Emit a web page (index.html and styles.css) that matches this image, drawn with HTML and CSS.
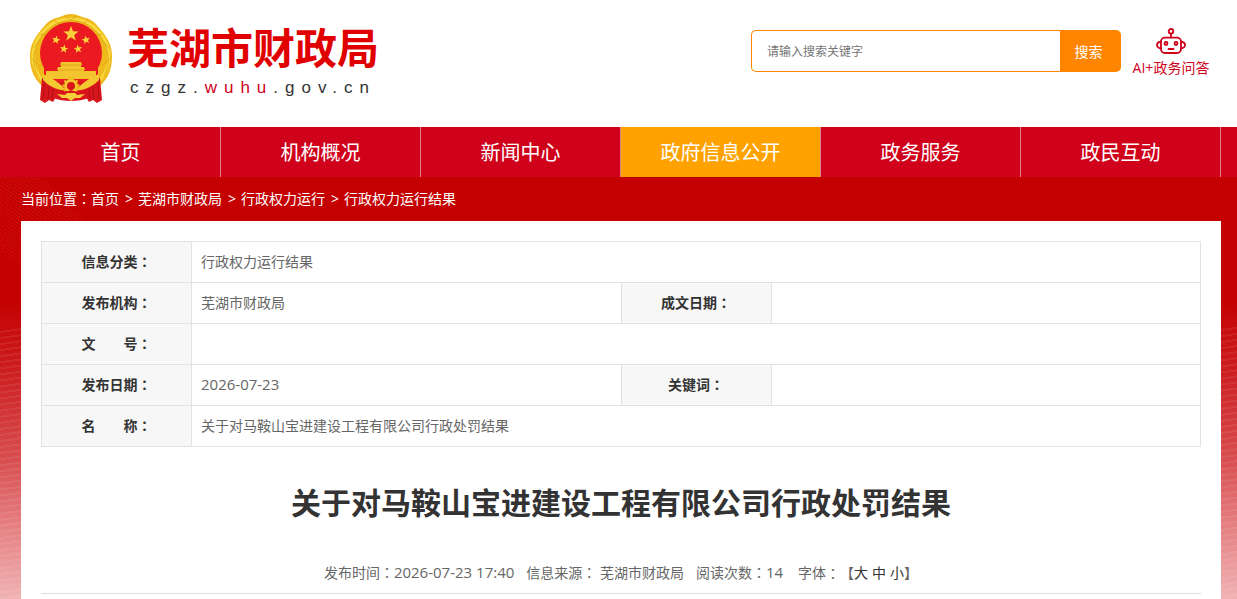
FILE: index.html
```html
<!DOCTYPE html>
<html lang="zh-CN">
<head>
<meta charset="utf-8">
<meta name="viewport" content="width=device-width, initial-scale=1">
<title>关于对马鞍山宝进建设工程有限公司行政处罚结果</title>
<link rel="stylesheet" href="styles.css">
</head>
<body>
<header class="header">
  <a class="brand" href="#">
    <svg class="emblem" viewBox="0 0 82 90" aria-hidden="true">
      <defs>
        <path id="star" d="M0-1 .25-.34 .951-.309 .4.13 .588.809 0 .42-.588.809-.4.13-.951-.309-.25-.34z"/>
      </defs>
      <path fill="#efb91b" d="M41 0c7 0 9 3 15 4 7 2 10 6 15 12 6 7 11 15 11 26 0 14-4 22-11 29L58 82H24L11 71C4 64 0 56 0 42 0 31 5 23 11 16 16 10 19 6 26 4c6-1 8-4 15-4z"/>
      <path fill="none" stroke="#f8d83c" stroke-width="3" d="M12 66C-3 48 2 27 17 14 29 2 53 2 65 14c15 13 20 34 5 52"/>
      <path fill="none" stroke="#dca615" stroke-width=".8" d="M8 62C-1 46 5 26 19 15 31 4 51 4 63 15c14 11 20 31 11 47M3 34l7-8M2 45l8 7M10 21l9-1M24 6l5 4M79 34l-7-8M80 45l-8 7M72 21l-9-1M58 6l-5 4M35 2l6 4 6-4"/>
      <circle cx="41" cy="39" r="31" fill="#ea1a20"/>
      <path fill="#ea1a20" d="M14 54h54v16H14z"/>
      <g fill="#f8d13c">
        <use href="#star" transform="translate(41 20) scale(8)"/>
        <use href="#star" transform="translate(26 26) rotate(12) scale(4.5)"/>
        <use href="#star" transform="translate(56 26) rotate(-12) scale(4.5)"/>
        <use href="#star" transform="translate(34 35) rotate(8) scale(4.5)"/>
        <use href="#star" transform="translate(48 35) rotate(-8) scale(4.5)"/>
      </g>
      <path fill="#f3c42d" d="M31 48h20l1 3h-1v2h3l1 3h-1v1h12v5h-2v3H18v-3h-2v-5h12v-1h-1l1-3h3v-2h-1z"/>
      <path stroke="#d79c18" stroke-width=".7" d="M30 51h22M28 56h26"/>
      <path fill="#d9151c" d="M12 64c7 0 11 2 17 5 5-4 19-4 24 0 6-3 10-5 17-5l2 22-5 3-4-3-4 2-3-5H26l-3 5-4-2-4 3-5-3z"/>
      <path fill="#f4c92f" d="M13 60c8 3 13 7 18 11l5 5c-9 1-17-4-23-10zM69 60c-8 3-13 7-18 11l-5 5c9 1 17-4 23-10z"/>
      <circle cx="41" cy="72" r="5.500" fill="none" stroke="#f4c92f" stroke-width="3"/>
      <circle cx="41" cy="72" r="7.500" fill="none" stroke="#efb91b" stroke-width="2" stroke-dasharray="2.500 2"/>
      <path fill="#d9151c" d="M26 75c5 4 10 3 15 1 5 2 10 3 15-1l3 9c-11 4-25 4-36 0z"/>
      <path fill="#f5cf3c" d="M27 80l8 1 2-2h8l2 2 8-1-5 4h-5l-4 3-4-3h-5z"/>
      <path fill="none" stroke="#9e1014" stroke-width=".8" d="M14 70l-1 15M19 73l-1 12M23 75l-1 10M68 70l1 15M63 73l1 12M59 75l1 10"/>
    </svg>
    <span class="brand-text">
      <span class="brand-name">芜湖市财政局</span>
      <span class="brand-domain">czgz.<em>wuhu</em>.gov.cn</span>
    </span>
  </a>
  <div class="tools">
    <form class="search" role="search">
      <input class="search-input" type="text" aria-label="搜索关键字" placeholder="请输入搜索关键字">
      <button class="search-button" type="button">搜索</button>
    </form>
    <a class="assistant" href="#">
      <svg class="robot" viewBox="0 0 30 27" fill="none" stroke="currentColor" stroke-width="1.8" stroke-linecap="round" aria-hidden="true">
        <circle cx="15" cy="3.3" r="2.3"/>
        <path d="M15 5.6v4"/>
        <rect x="5" y="9.6" width="20" height="15.4" rx="4"/>
        <path d="M5 13.500c-2.500.5-4 2-4 3.500s1.500 3 4 3.500M25 13.500c2.500.5 4 2 4 3.500s-1.500 3-4 3.500M12.500 21h5"/>
        <circle cx="10" cy="15.500" r="1.500"/>
        <circle cx="20" cy="15.500" r="1.500"/>
      </svg>
      <span>AI+政务问答</span>
    </a>
  </div>
</header>
<nav class="nav">
  <a class="nav-item" href="#">首页</a>
  <a class="nav-item" href="#">机构概况</a>
  <a class="nav-item" href="#">新闻中心</a>
  <a class="nav-item active" href="#">政府信息公开</a>
  <a class="nav-item" href="#">政务服务</a>
  <a class="nav-item" href="#">政民互动</a>
</nav>
<main class="page">
  <div class="crumbs">
    <span>当前位置<span class="colon" lang="zh-TW">：</span></span>
    <a href="#">首页</a><span class="sep">&gt;</span>
    <a href="#">芜湖市财政局</a><span class="sep">&gt;</span>
    <a href="#">行政权力运行</a><span class="sep">&gt;</span>
    <a href="#">行政权力运行结果</a>
  </div>
  <article class="card">
    <table class="info">
      <colgroup><col class="col-label"><col><col class="col-label"><col></colgroup>
      <tbody>
        <tr><th scope="row">信息分类<span class="colon" lang="zh-TW">：</span></th><td colspan="3">行政权力运行结果</td></tr>
        <tr><th scope="row">发布机构<span class="colon" lang="zh-TW">：</span></th><td>芜湖市财政局</td><th scope="row">成文日期<span class="colon" lang="zh-TW">：</span></th><td></td></tr>
        <tr><th scope="row">文　　号<span class="colon" lang="zh-TW">：</span></th><td colspan="3"></td></tr>
        <tr><th scope="row">发布日期<span class="colon" lang="zh-TW">：</span></th><td><span class="num">2026-07-23</span></td><th scope="row">关键词<span class="colon" lang="zh-TW">：</span></th><td></td></tr>
        <tr><th scope="row">名　　称<span class="colon" lang="zh-TW">：</span></th><td colspan="3">关于对马鞍山宝进建设工程有限公司行政处罚结果</td></tr>
      </tbody>
    </table>
    <h1 class="title">关于对马鞍山宝进建设工程有限公司行政处罚结果</h1>
    <div class="meta">
      <span>发布时间<span class="colon" lang="zh-TW">：</span><span class="num">2026-07-23 17:40</span></span>
      <span>信息来源<span class="colon" lang="zh-TW">：</span> 芜湖市财政局</span>
      <span>阅读次数<span class="colon" lang="zh-TW">：</span><span class="num">14</span></span>
      <span class="sizes">字体<span class="colon" lang="zh-TW">：</span>【<span class="size-list"><button type="button">大</button><button type="button">中</button><button type="button">小</button></span>】</span>
    </div>
  </article>
</main>
</body>
</html>
```
FILE: styles.css
```css
* {
  box-sizing: border-box;
}

body {
  display: flex;
  flex-direction: column;
  min-height: 100vh;
  margin: 0;
  background: #fff;
  color: #666;
  font: 14px/20px "Open Sans", "Noto Sans CJK SC", sans-serif;
}

a {
  color: inherit;
  text-decoration: none;
}

button,
input {
  font-family: inherit;
}

.colon {
  font-family: "Noto Sans CJK TC", sans-serif;
  line-height: 1;
}

.num {
  font-size: 15px;
  line-height: 1;
}

/* Header */
.header {
  display: flex;
  justify-content: space-between;
  height: 127px;
  padding: 14px 26px 0 30px;
}

.brand {
  display: flex;
  gap: 15px;
}

.emblem {
  width: 82px;
  height: 90px;
}

.brand-text {
  display: flex;
  flex-direction: column;
  padding-top: 8px;
}

.brand-name {
  color: #e10000;
  font-size: 42px;
  font-weight: 700;
  line-height: 52px;
}

.brand-domain {
  padding-left: 3px;
  color: #333;
  font: 17px/28px "Liberation Sans", sans-serif;
  letter-spacing: 7px;
}

.brand-domain em {
  color: #d0021b;
  font-style: normal;
}

.tools {
  display: flex;
  align-items: flex-start;
  gap: 10px;
  padding-top: 14px;
}

.search {
  display: flex;
  width: 370px;
  height: 42px;
  margin-top: 2px;
}

.search-input {
  flex: 1;
  min-width: 0;
  padding: 0 15px;
  border: 1px solid #ff8500;
  border-right: 0;
  border-radius: 5px 0 0 5px;
  color: #333;
  font-size: 12px;
}

.search-input::placeholder {
  color: #757575;
}

.search-button {
  width: 61px;
  padding: 0 4px 0 0;
  border: 0;
  border-radius: 0 5px 5px 0;
  background: #ff8500;
  color: #fff;
  font-size: 14px;
}

.assistant {
  display: flex;
  flex-direction: column;
  align-items: center;
  gap: 3px;
  min-width: 80px;
  color: #d0021b;
}

.robot {
  width: 30px;
  height: 27px;
}

/* Main navigation */
.nav {
  display: grid;
  grid-template-columns: repeat(6, 1fr);
  padding: 0 16px 0 21px;
  background: #d0021b;
}

.nav-item {
  padding-top: 2px;
  border-right: 1px solid #e0808c;
  color: #fff;
  font-size: 20px;
  line-height: 48px;
  text-align: center;
}

.nav-item.active {
  background: #ffa200;
}

/* Page background and breadcrumbs */
.page {
  position: relative;
  display: flex;
  flex: 1;
  flex-direction: column;
  padding: 0 16px 0 21px;
  background:
    repeating-linear-gradient(172deg, transparent 0 4px, rgba(255, 255, 255, 0.07) 4px 6px) 0 150px no-repeat,
    linear-gradient(#c40000 0, #c40000 120px, #cc1c1e 190px, #d84c4e 280px, #e58082 350px, #f0b2b3 422px);
}

.page::before {
  position: absolute;
  top: 0;
  left: 0;
  width: 86px;
  height: 88px;
  background: repeating-linear-gradient(35deg, #c40000 0 2px, #ca0c0c 2px 3px);
  clip-path: polygon(0 0, 43px 0, 86px 44px, 21px 44px, 21px 88px, 0 76px);
  content: "";
}

.crumbs {
  position: relative;
  display: flex;
  align-items: center;
  height: 44px;
  color: #fff;
}

.sep {
  padding: 0 5px 0 6px;
}

/* Article */
.card {
  position: relative;
  flex: 1;
  padding: 20px 20px 0;
  background: #fff;
}

.info {
  width: 100%;
  border-collapse: collapse;
  table-layout: fixed;
}

.col-label {
  width: 150px;
}

.info th,
.info td {
  height: 41px;
  padding: 0 9px;
  border: 1px solid #e2e2e2;
}

.info th {
  background: #f7f7f7;
  color: #333;
  font-weight: 700;
}

.title {
  margin: 36px 0 0;
  color: #333;
  font-size: 30px;
  font-weight: 700;
  line-height: 40px;
  text-align: center;
}

.meta {
  display: flex;
  justify-content: center;
  gap: 12px;
  margin-top: 40px;
  padding: 0 0 10px;
  border-bottom: 1px solid #ddd;
}

.sizes {
  display: flex;
  align-items: center;
  padding-left: 3px;
}

.size-list {
  display: flex;
  gap: 4px;
}

.size-list button {
  padding: 0;
  border: 0;
  background: none;
  color: #333;
  font-size: 14px;
  line-height: 20px;
}
```
